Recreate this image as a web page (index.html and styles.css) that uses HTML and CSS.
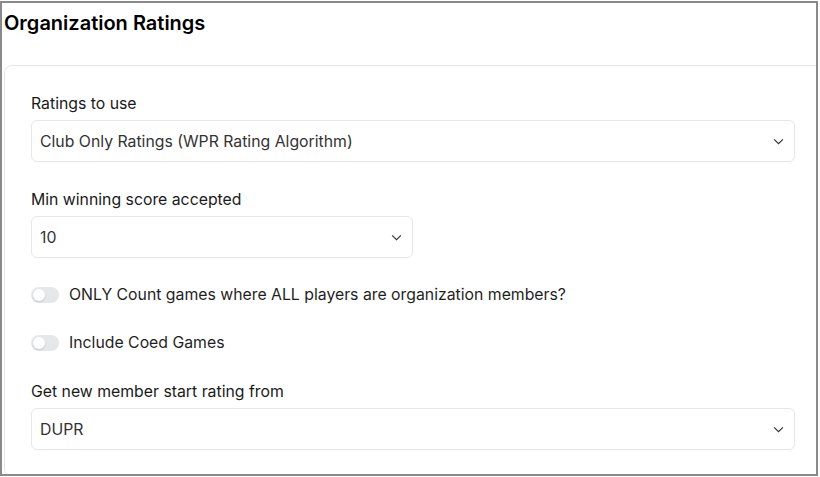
FILE: index.html
```html
<!DOCTYPE html>
<html lang="en">
<head>
    <meta charset="UTF-8">
    <meta name="viewport" content="width=device-width, initial-scale=1.0">
    <title>Organization Ratings</title>
    <link rel="stylesheet" href="styles.css">
</head>
<body>
    <div class="frame">
        <h1 class="title">Organization Ratings</h1>

        <div class="card">
            <div class="field">
                <label class="label">Ratings to use</label>
                <div class="select">
                    <span>Club Only Ratings (WPR Rating Algorithm)</span>
                    <svg class="chevron" viewBox="0 0 12 8" width="12" height="8"><path d="M1 1.5l5 5 5-5" fill="none" stroke="#333" stroke-width="1.3"/></svg>
                </div>
            </div>

            <div class="field">
                <label class="label">Min winning score accepted</label>
                <div class="select select-small">
                    <span>10</span>
                    <svg class="chevron" viewBox="0 0 12 8" width="12" height="8"><path d="M1 1.5l5 5 5-5" fill="none" stroke="#333" stroke-width="1.3"/></svg>
                </div>
            </div>

            <div class="toggle-row">
                <span class="toggle"><span class="knob"></span></span>
                <span>ONLY Count games where ALL players are organization members?</span>
            </div>

            <div class="toggle-row">
                <span class="toggle"><span class="knob"></span></span>
                <span>Include Coed Games</span>
            </div>

            <div class="field">
                <label class="label">Get new member start rating from</label>
                <div class="select">
                    <span>DUPR</span>
                    <svg class="chevron" viewBox="0 0 12 8" width="12" height="8"><path d="M1 1.5l5 5 5-5" fill="none" stroke="#333" stroke-width="1.3"/></svg>
                </div>
            </div>
        </div>
    </div>
</body>
</html>
```

FILE: styles.css
```css
* {
    box-sizing: border-box;
}
body {
    margin: 0;
    background: #fff;
    font-family: Inter, 'Noto Sans', sans-serif;
    color: #111;
}
.frame {
    margin-top: 1px;
    width: 818px;
    height: 475px;
    border: 2px solid #8a8a8a;
    overflow: hidden;
    padding-left: 2px;
}
.title {
    margin: 0;
    padding-top: 7px;
    font-size: 20px;
    line-height: 26px;
    font-weight: 600;
    color: #000;
}
.card {
    margin: 29px -10px 0 0;
    border: 1px solid #e6e6e6;
    border-radius: 8px;
    padding: 26px;
    display: flex;
    flex-direction: column;
    gap: 26px;
}
.field {
    display: flex;
    flex-direction: column;
    gap: 5px;
}
.label {
    padding-top: 1px;
    font-size: 15.8px;
    line-height: 22px;
    color: #1a1a1a;
}
.select {
    width: 764px;
    height: 42px;
    border: 1px solid #e5e7eb;
    border-radius: 6px;
    padding: 0 10px 0 8px;
    display: flex;
    align-items: center;
    justify-content: space-between;
    font-size: 15.8px;
    color: #333;
}
.select-small {
    width: 382px;
}
.chevron {
    width: 11px;
    height: 7px;
}
.toggle-row {
    display: flex;
    align-items: center;
    gap: 10px;
    font-size: 15.8px;
    line-height: 22px;
    color: #1f1f1f;
}
.toggle {
    width: 28px;
    height: 16px;
    border-radius: 8px;
    background: #e5e7eb;
    padding: 2px;
    display: flex;
}
.knob {
    width: 12px;
    height: 12px;
    border-radius: 50%;
    background: #fff;
    box-shadow: 0 1px 2px rgba(0, 0, 0, 0.15);
}
```
